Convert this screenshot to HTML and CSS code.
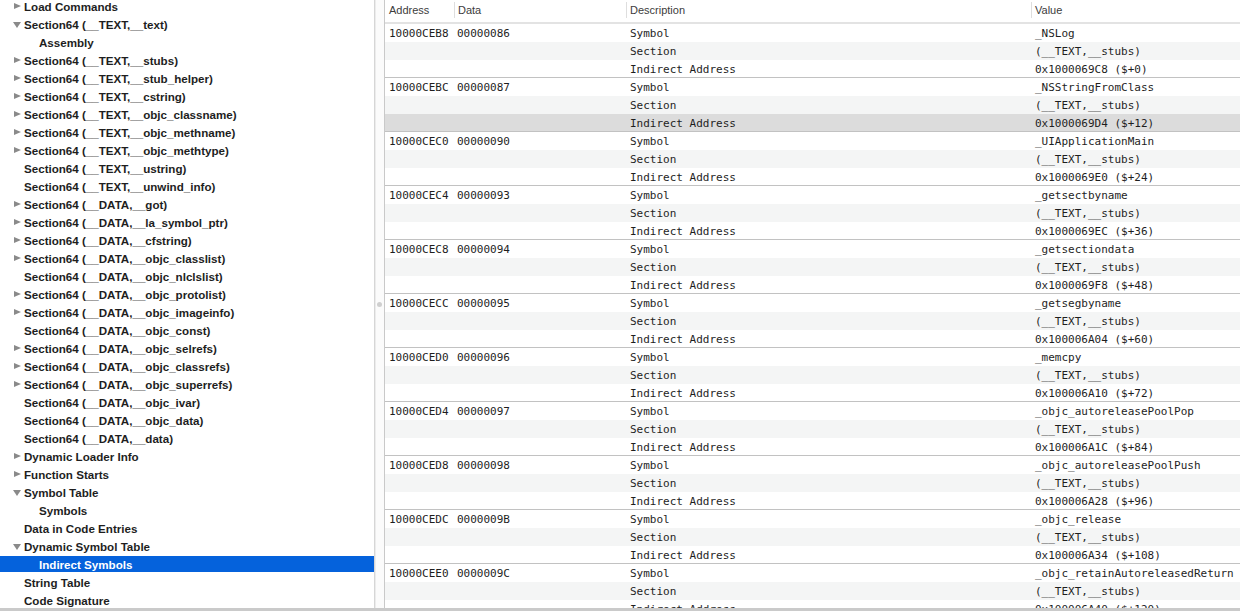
FILE: index.html
```html
<!DOCTYPE html>
<html>
<head>
<meta charset="utf-8">
<link rel="stylesheet" href="styles.css">
</head>
<body>
<div class="window">
  <div class="main">
    <div class="sidebar">
      <div class="tree">
        <div class="node l1"><span class="tw closed"></span><span class="lbl">Load Commands</span></div>
        <div class="node l1"><span class="tw open"></span><span class="lbl">Section64 (__TEXT,__text)</span></div>
        <div class="node l2"><span class="tw"></span><span class="lbl">Assembly</span></div>
        <div class="node l1"><span class="tw closed"></span><span class="lbl">Section64 (__TEXT,__stubs)</span></div>
        <div class="node l1"><span class="tw closed"></span><span class="lbl">Section64 (__TEXT,__stub_helper)</span></div>
        <div class="node l1"><span class="tw closed"></span><span class="lbl">Section64 (__TEXT,__cstring)</span></div>
        <div class="node l1"><span class="tw closed"></span><span class="lbl">Section64 (__TEXT,__objc_classname)</span></div>
        <div class="node l1"><span class="tw closed"></span><span class="lbl">Section64 (__TEXT,__objc_methname)</span></div>
        <div class="node l1"><span class="tw closed"></span><span class="lbl">Section64 (__TEXT,__objc_methtype)</span></div>
        <div class="node l1"><span class="tw"></span><span class="lbl">Section64 (__TEXT,__ustring)</span></div>
        <div class="node l1"><span class="tw"></span><span class="lbl">Section64 (__TEXT,__unwind_info)</span></div>
        <div class="node l1"><span class="tw closed"></span><span class="lbl">Section64 (__DATA,__got)</span></div>
        <div class="node l1"><span class="tw closed"></span><span class="lbl">Section64 (__DATA,__la_symbol_ptr)</span></div>
        <div class="node l1"><span class="tw closed"></span><span class="lbl">Section64 (__DATA,__cfstring)</span></div>
        <div class="node l1"><span class="tw closed"></span><span class="lbl">Section64 (__DATA,__objc_classlist)</span></div>
        <div class="node l1"><span class="tw"></span><span class="lbl">Section64 (__DATA,__objc_nlclslist)</span></div>
        <div class="node l1"><span class="tw closed"></span><span class="lbl">Section64 (__DATA,__objc_protolist)</span></div>
        <div class="node l1"><span class="tw closed"></span><span class="lbl">Section64 (__DATA,__objc_imageinfo)</span></div>
        <div class="node l1"><span class="tw"></span><span class="lbl">Section64 (__DATA,__objc_const)</span></div>
        <div class="node l1"><span class="tw closed"></span><span class="lbl">Section64 (__DATA,__objc_selrefs)</span></div>
        <div class="node l1"><span class="tw closed"></span><span class="lbl">Section64 (__DATA,__objc_classrefs)</span></div>
        <div class="node l1"><span class="tw closed"></span><span class="lbl">Section64 (__DATA,__objc_superrefs)</span></div>
        <div class="node l1"><span class="tw"></span><span class="lbl">Section64 (__DATA,__objc_ivar)</span></div>
        <div class="node l1"><span class="tw"></span><span class="lbl">Section64 (__DATA,__objc_data)</span></div>
        <div class="node l1"><span class="tw"></span><span class="lbl">Section64 (__DATA,__data)</span></div>
        <div class="node l1"><span class="tw closed"></span><span class="lbl">Dynamic Loader Info</span></div>
        <div class="node l1"><span class="tw closed"></span><span class="lbl">Function Starts</span></div>
        <div class="node l1"><span class="tw open"></span><span class="lbl">Symbol Table</span></div>
        <div class="node l2"><span class="tw"></span><span class="lbl">Symbols</span></div>
        <div class="node l1"><span class="tw"></span><span class="lbl">Data in Code Entries</span></div>
        <div class="node l1"><span class="tw open"></span><span class="lbl">Dynamic Symbol Table</span></div>
        <div class="node l2 selected"><span class="tw"></span><span class="lbl">Indirect Symbols</span></div>
        <div class="node l1"><span class="tw"></span><span class="lbl">String Table</span></div>
        <div class="node l1"><span class="tw"></span><span class="lbl">Code Signature</span></div>
      </div>
    </div>
    <div class="splitter"><span class="grip"></span></div>
    <div class="content">
      <div class="thead">
        <div class="th first">Address</div>
        <div class="th">Data</div>
        <div class="th">Description</div>
        <div class="th">Value</div>
      </div>
      <div class="tbody">
        <div class="group">
          <div class="row"><div class="c addr">10000CEB8</div><div class="c data">00000086</div><div class="c desc">Symbol</div><div class="c val">_NSLog</div></div>
          <div class="row alt"><div class="c addr"></div><div class="c data"></div><div class="c desc">Section</div><div class="c val">(__TEXT,__stubs)</div></div>
          <div class="row last"><div class="c addr"></div><div class="c data"></div><div class="c desc">Indirect Address</div><div class="c val">0x1000069C8 ($+0)</div></div>
        </div>
        <div class="group">
          <div class="row"><div class="c addr">10000CEBC</div><div class="c data">00000087</div><div class="c desc">Symbol</div><div class="c val">_NSStringFromClass</div></div>
          <div class="row alt"><div class="c addr"></div><div class="c data"></div><div class="c desc">Section</div><div class="c val">(__TEXT,__stubs)</div></div>
          <div class="row last hl"><div class="c addr"></div><div class="c data"></div><div class="c desc">Indirect Address</div><div class="c val">0x1000069D4 ($+12)</div></div>
        </div>
        <div class="group">
          <div class="row"><div class="c addr">10000CEC0</div><div class="c data">00000090</div><div class="c desc">Symbol</div><div class="c val">_UIApplicationMain</div></div>
          <div class="row alt"><div class="c addr"></div><div class="c data"></div><div class="c desc">Section</div><div class="c val">(__TEXT,__stubs)</div></div>
          <div class="row last"><div class="c addr"></div><div class="c data"></div><div class="c desc">Indirect Address</div><div class="c val">0x1000069E0 ($+24)</div></div>
        </div>
        <div class="group">
          <div class="row"><div class="c addr">10000CEC4</div><div class="c data">00000093</div><div class="c desc">Symbol</div><div class="c val">_getsectbyname</div></div>
          <div class="row alt"><div class="c addr"></div><div class="c data"></div><div class="c desc">Section</div><div class="c val">(__TEXT,__stubs)</div></div>
          <div class="row last"><div class="c addr"></div><div class="c data"></div><div class="c desc">Indirect Address</div><div class="c val">0x1000069EC ($+36)</div></div>
        </div>
        <div class="group">
          <div class="row"><div class="c addr">10000CEC8</div><div class="c data">00000094</div><div class="c desc">Symbol</div><div class="c val">_getsectiondata</div></div>
          <div class="row alt"><div class="c addr"></div><div class="c data"></div><div class="c desc">Section</div><div class="c val">(__TEXT,__stubs)</div></div>
          <div class="row last"><div class="c addr"></div><div class="c data"></div><div class="c desc">Indirect Address</div><div class="c val">0x1000069F8 ($+48)</div></div>
        </div>
        <div class="group">
          <div class="row"><div class="c addr">10000CECC</div><div class="c data">00000095</div><div class="c desc">Symbol</div><div class="c val">_getsegbyname</div></div>
          <div class="row alt"><div class="c addr"></div><div class="c data"></div><div class="c desc">Section</div><div class="c val">(__TEXT,__stubs)</div></div>
          <div class="row last"><div class="c addr"></div><div class="c data"></div><div class="c desc">Indirect Address</div><div class="c val">0x100006A04 ($+60)</div></div>
        </div>
        <div class="group">
          <div class="row"><div class="c addr">10000CED0</div><div class="c data">00000096</div><div class="c desc">Symbol</div><div class="c val">_memcpy</div></div>
          <div class="row alt"><div class="c addr"></div><div class="c data"></div><div class="c desc">Section</div><div class="c val">(__TEXT,__stubs)</div></div>
          <div class="row last"><div class="c addr"></div><div class="c data"></div><div class="c desc">Indirect Address</div><div class="c val">0x100006A10 ($+72)</div></div>
        </div>
        <div class="group">
          <div class="row"><div class="c addr">10000CED4</div><div class="c data">00000097</div><div class="c desc">Symbol</div><div class="c val">_objc_autoreleasePoolPop</div></div>
          <div class="row alt"><div class="c addr"></div><div class="c data"></div><div class="c desc">Section</div><div class="c val">(__TEXT,__stubs)</div></div>
          <div class="row last"><div class="c addr"></div><div class="c data"></div><div class="c desc">Indirect Address</div><div class="c val">0x100006A1C ($+84)</div></div>
        </div>
        <div class="group">
          <div class="row"><div class="c addr">10000CED8</div><div class="c data">00000098</div><div class="c desc">Symbol</div><div class="c val">_objc_autoreleasePoolPush</div></div>
          <div class="row alt"><div class="c addr"></div><div class="c data"></div><div class="c desc">Section</div><div class="c val">(__TEXT,__stubs)</div></div>
          <div class="row last"><div class="c addr"></div><div class="c data"></div><div class="c desc">Indirect Address</div><div class="c val">0x100006A28 ($+96)</div></div>
        </div>
        <div class="group">
          <div class="row"><div class="c addr">10000CEDC</div><div class="c data">0000009B</div><div class="c desc">Symbol</div><div class="c val">_objc_release</div></div>
          <div class="row alt"><div class="c addr"></div><div class="c data"></div><div class="c desc">Section</div><div class="c val">(__TEXT,__stubs)</div></div>
          <div class="row last"><div class="c addr"></div><div class="c data"></div><div class="c desc">Indirect Address</div><div class="c val">0x100006A34 ($+108)</div></div>
        </div>
        <div class="group">
          <div class="row"><div class="c addr">10000CEE0</div><div class="c data">0000009C</div><div class="c desc">Symbol</div><div class="c val">_objc_retainAutoreleasedReturn</div></div>
          <div class="row alt"><div class="c addr"></div><div class="c data"></div><div class="c desc">Section</div><div class="c val">(__TEXT,__stubs)</div></div>
          <div class="row last"><div class="c addr"></div><div class="c data"></div><div class="c desc">Indirect Address</div><div class="c val">0x100006A40 ($+120)</div></div>
        </div>
      </div>
    </div>
  </div>
  <div class="bottom"></div>
</div>
</body>
</html>
```

FILE: styles.css
```css
* { box-sizing: border-box; }
html, body { margin: 0; padding: 0; background: #ffffff; }
.window {
  width: 1240px;
  height: 611px;
  display: flex;
  flex-direction: column;
  overflow: hidden;
}
.main {
  height: 608px;
  display: flex;
  overflow: hidden;
}
.bottom {
  height: 3px;
  background: #cacaca;
}
.sidebar {
  width: 375px;
  flex: none;
  background: #ffffff;
  border-right: 1px solid #d6d6d6;
  overflow: hidden;
}
.tree {
  margin-top: -2px;
  display: flex;
  flex-direction: column;
}
.node {
  height: 16px;
  margin-bottom: 2px;
  display: flex;
  align-items: center;
  font-family: "Liberation Sans", Arial, sans-serif;
  font-weight: bold;
  font-size: 11.6px;
  color: #1e1e1e;
  white-space: nowrap;
}
.node.l1 { padding-left: 12px; }
.node.l2 { padding-left: 27px; }
.node.selected { background: #0562dc; color: #ffffff; }
.tw {
  width: 12px;
  height: 16px;
  flex: none;
  position: relative;
}
.tw.closed::before {
  content: "";
  position: absolute;
  left: 2px;
  top: 5px;
  border-top: 3.5px solid transparent;
  border-bottom: 3.5px solid transparent;
  border-left: 7px solid #8a8a8a;
}
.tw.open::before {
  content: "";
  position: absolute;
  left: 1px;
  top: 6px;
  border-left: 4px solid transparent;
  border-right: 4px solid transparent;
  border-top: 6px solid #8a8a8a;
}
.lbl { line-height: 16px; padding-top: 2px; }

.splitter {
  width: 10px;
  flex: none;
  background: #fbfbfb;
  border-left: 1px solid #ececec;
  border-right: 1px solid #c9c9c9;
  display: flex;
  align-items: center;
  justify-content: center;
}
.grip {
  width: 5px;
  height: 5px;
  border-radius: 50%;
  background: #cfcfcf;
  margin-left: -1px;
}
.content {
  flex: 1;
  min-width: 0;
  overflow: hidden;
  background: #ffffff;
}
.thead {
  height: 24px;
  display: grid;
  grid-template-columns: 69px 172px 405px 1fr;
  align-items: center;
  border-bottom: 2px solid #e3e3e3;
  font-family: "Liberation Sans", Arial, sans-serif;
  font-size: 11px;
  color: #3c3c3c;
}
.th {
  height: 16px;
  line-height: 16px;
  padding-left: 3px;
  border-left: 1px solid #dedede;
  margin-top: -2px;
}
.th.first { border-left: none; padding-left: 4px; }
.tbody { display: flex; flex-direction: column; }
.group {
  border-bottom: 1px solid #c2c2c2;
}
.row {
  height: 18px;
  display: grid;
  grid-template-columns: 69px 172px 405px 1fr;
  align-items: start;
  font-family: "DejaVu Sans Mono", "Liberation Mono", monospace;
  font-size: 11px;
  color: #1e1e1e;
  white-space: nowrap;
}
.row.alt { background: #f4f5f5; }
.row.last { height: 17px; }
.row.hl { background: #dcdcdc; }
.c { overflow: hidden; line-height: 17px; padding-top: 1px; }
.addr { padding-left: 4px; }
.data { padding-left: 3px; }
.desc { padding-left: 4px; }
.val { padding-left: 4px; }
```
